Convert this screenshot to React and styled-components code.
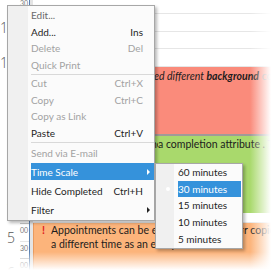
import React from "react";
import styled, { createGlobalStyle } from "styled-components";

const Global = createGlobalStyle`
  html, body { margin: 0; padding: 0; background: #fff; }
  body { width: 272px; height: 272px; overflow: hidden; font-family: "Lato", "Noto Sans", sans-serif; }
`;

const Stage = styled.div`
  position: relative;
  width: 272px;
  height: 272px;
  overflow: hidden;
  background: #fff;
  &::after {
    content: "";
    position: absolute;
    inset: 0;
    pointer-events: none;
    background:
      linear-gradient(to right, rgba(255,255,255,0) 250px, #fff 271px),
      linear-gradient(to bottom, rgba(255,255,255,0) 252px, #fff 270px);
  }
`;

const Scheduler = styled.div`
  display: flex;
  margin-top: -21px;
  width: 320px;
`;

const Ruler = styled.div`
  width: 29px;
  flex: none;
  border-right: 1px solid #5a80b0;
`;

const Hour = styled.div`
  display: flex;
  height: 35px;
`;

const HourNum = styled.div`
  width: 20px;
  padding: 7px 5px 0 0;
  box-sizing: border-box;
  text-align: right;
  font-family: "Open Sans", sans-serif;
  font-size: 14px;
  line-height: 14px;
  color: #555;
  font-weight: 300;
`;

const Minutes = styled.div`
  flex: 1;
  display: flex;
  flex-direction: column;
`;

const Minute = styled.div`
  height: 17.5px;
  box-sizing: border-box;
  border-bottom: 1px solid ${(p) => (p.$last ? "#c8c8c8" : "#e6e6e6")};
  font-size: 7px;
  line-height: 7px;
  padding-top: 3px;
  color: #7a7a7a;
`;

const TimeBar = styled.div`
  width: 3px;
  flex: none;
  background: #e4e4e4;
`;

const Column = styled.div`
  flex: 1;
  display: flex;
  flex-direction: column;
`;

const Slot = styled.div`
  height: ${(p) => p.$h}px;
  box-sizing: border-box;
  border-bottom: 1px solid #e6e6e6;
`;

const Appt = styled.div`
  height: ${(p) => p.$h}px;
  box-sizing: border-box;
  background: ${(p) => p.$bg};
  border-bottom: ${(p) => (p.$border ? "2px solid #a09a98" : "none")};
  border-left: 1px solid ${(p) => p.$edge};
  padding: ${(p) => p.$pad};
  font-size: 10.5px;
  line-height: 14px;
  color: #1c1c1c;
  white-space: nowrap;
  overflow: hidden;
`;

/* part of a text line that lies under the context menu: clipped to a fixed run */
const Hidden = styled.span`
  display: inline-block;
  vertical-align: top;
  width: ${(p) => p.$w}px;
  overflow: hidden;
  white-space: nowrap;
`;

const Bang = styled.span`
  color: #e02020;
  font-weight: 700;
  display: inline-block;
  vertical-align: top;
  width: 9px;
`;

const Dim = styled.span`
  color: #8a8a8a;
`;

const Menu = styled.div`
  position: absolute;
  left: ${(p) => p.$x}px;
  top: ${(p) => p.$y}px;
  width: ${(p) => p.$w}px;
  box-sizing: border-box;
  border: 1px solid #a7a7a7;
  background: linear-gradient(to right, #f0f0f0 ${(p) => p.$gutter}px, #fbfbfb ${(p) => p.$gutter}px);
  box-shadow: 2px 2px 3px rgba(0,0,0,0.28);
  padding: ${(p) => p.$pad};
  font-size: 10px;
  color: #1e1e1e;
  z-index: 2;
`;

const Item = styled.div`
  height: ${(p) => p.$h}px;
  box-sizing: border-box;
  display: grid;
  grid-template-columns: 1fr auto 11px;
  align-items: center;
  padding-left: ${(p) => p.$indent}px;
  position: relative;
  color: ${(p) => (p.$active ? "#fff" : p.$disabled ? "#a2a2a2" : p.$mid ? "#6a6a6a" : "#1e1e1e")};
  background: ${(p) => (p.$active ? "#3592db" : "transparent")};
  background-clip: content-box;
  padding-top: ${(p) => (p.$active ? p.$inset : 0)}px;
  padding-bottom: ${(p) => (p.$active ? p.$inset : 0)}px;
`;

const Label = styled.span`
  white-space: nowrap;
`;

const Shortcut = styled.span`
  white-space: nowrap;
  text-align: right;
`;

const Arrow = styled.span`
  width: 0;
  height: 0;
  margin-left: 4px;
  border-top: 3px solid transparent;
  border-bottom: 3px solid transparent;
  border-left: 3.5px solid ${(p) => (p.$active ? "#fff" : "#222")};
`;

const Bullet = styled.span`
  position: absolute;
  left: 10px;
  top: 50%;
  width: 4px;
  height: 4px;
  margin-top: -2px;
  border-radius: 50%;
  background: #fff;
`;

const Sep = styled.div`
  height: 2px;
  display: flex;
  align-items: center;
  padding-left: 23px;
  &::before {
    content: "";
    flex: 1;
    height: 1px;
    background: #d9d9d9;
  }
`;

const hours = ["10", "11", "12", "1", "2", "3", "4", "5", "6"];

const mainItems = [
  { label: "Edit...", mid: true, h: 16.5 },
  { label: "Add...", sc: "Ins", h: 16.5 },
  { label: "Delete", sc: "Del", dis: true, h: 16.5 },
  { label: "Quick Print", dis: true, h: 16.5 },
  { sep: true },
  { label: "Cut", sc: "Ctrl+X", dis: true, h: 16.5 },
  { label: "Copy", sc: "Ctrl+C", dis: true, h: 16.5 },
  { label: "Copy as Link", dis: true, h: 16.5 },
  { label: "Paste", sc: "Ctrl+V", h: 16.5 },
  { sep: true },
  { label: "Send via E-mail", dis: true, h: 19 },
  { label: "Time Scale", sub: true, active: true, h: 19 },
  { label: "Hide Completed", sc: "Ctrl+H", h: 19 },
  { label: "Filter", sub: true, h: 19 },
];

const scales = ["60 minutes", "30 minutes", "15 minutes", "10 minutes", "5 minutes"];

export default function App() {
  return (
    <>
      <Global />
      <Stage>
        <Scheduler>
          <Ruler>
            {hours.map((h) => (
              <Hour key={h}>
                <HourNum>{h}</HourNum>
                <Minutes>
                  <Minute>00</Minute>
                  <Minute $last>30</Minute>
                </Minutes>
              </Hour>
            ))}
          </Ruler>
          <TimeBar />
          <Column>
            <Slot $h={17.5} />
            <Slot $h={17.5} />
            <Slot $h={17.5} />
            <Slot $h={17.5} />
            <Slot $h={17.5} />
            <Appt $h={69.5} $bg="#fa8b7b" $edge="#e8786a" $border $pad="2px 0 0 8px">
              <Hidden $w={112}>Appointments can be formatt</Hidden>
              <i>ed different <b>background</b></i> <Dim>colors</Dim>
            </Appt>
            <Appt $h={77} $bg="#a9d96c" $edge="#94c55a" $pad="1px 0 0 8px">
              <Hidden $w={116}>Tasks can be marked done with</Hidden>
              a completion attribute . <Dim>Tasks</Dim>
            </Appt>
            <Slot $h={10} />
            <Appt $h={60} $bg="#fcb47b" $edge="#e89a5e" $pad="0 0 0 8px">
              <Bang>!</Bang>
              <Hidden $w={193}>Appointments can be easily moved to another time o</Hidden>
              r copied to
              <br />
              <Bang />a different time as an exception
            </Appt>
          </Column>
        </Scheduler>

        <Menu $x={7} $y={5} $w={148} $gutter={20} $pad="1px 0 1px 0">
          {mainItems.map((it, i) =>
            it.sep ? (
              <Sep key={i} />
            ) : (
              <Item
                key={i}
                $h={it.h}
                $indent={23}
                $inset={1}
                $active={it.active}
                $disabled={it.dis}
                $mid={it.mid}
              >
                <Label>{it.label}</Label>
                <Shortcut>{it.sc || ""}</Shortcut>
                {it.sub ? <Arrow $active={it.active} /> : <span />}
              </Item>
            )
          )}
        </Menu>

        <Menu $x={155} $y={163} $w={88} $gutter={18} $pad="0 1px 1px 0">
          {scales.map((s, i) => (
            <Item key={s} $h={16.6} $indent={22} $inset={0} $active={i === 1}>
              {i === 1 && <Bullet />}
              <Label>{s}</Label>
              <span />
              <span />
            </Item>
          ))}
        </Menu>
      </Stage>
    </>
  );
}
